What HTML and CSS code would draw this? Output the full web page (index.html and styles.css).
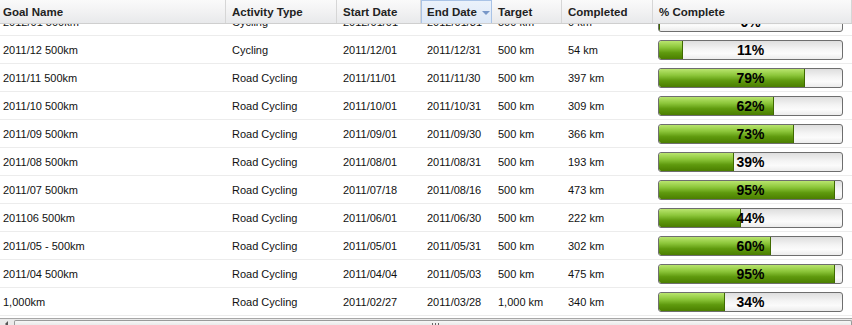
FILE: index.html
```html
<!DOCTYPE html>
<html>
<head>
<meta charset="utf-8">
<link rel="stylesheet" href="styles.css">
</head>
<body>
<div class="grid">
  <div class="head">
    <div class="hc first">Goal Name</div>
    <div class="hc">Activity Type</div>
    <div class="hc">Start Date</div>
    <div class="hc sorted">End Date <span class="arrow"></span></div>
    <div class="hc">Target</div>
    <div class="hc">Completed</div>
    <div class="hc last">% Complete</div>
  </div>
  <div class="body">
    <div class="rows">
      <div class="row"><div class="c first">2012/01 500km</div><div class="c">Cycling</div><div class="c">2012/01/01</div><div class="c">2012/01/31</div><div class="c">500 km</div><div class="c">0 km</div><div class="c pc"><div class="bar"><div class="fill" style="width:0%"></div><span class="pct">0%</span></div></div></div>
      <div class="row"><div class="c first">2011/12 500km</div><div class="c">Cycling</div><div class="c">2011/12/01</div><div class="c">2011/12/31</div><div class="c">500 km</div><div class="c">54 km</div><div class="c pc"><div class="bar"><div class="fill" style="width:13%"></div><span class="pct">11%</span></div></div></div>
      <div class="row"><div class="c first">2011/11 500km</div><div class="c">Road Cycling</div><div class="c">2011/11/01</div><div class="c">2011/11/30</div><div class="c">500 km</div><div class="c">397 km</div><div class="c pc"><div class="bar"><div class="fill" style="width:80%"></div><span class="pct">79%</span></div></div></div>
      <div class="row"><div class="c first">2011/10 500km</div><div class="c">Road Cycling</div><div class="c">2011/10/01</div><div class="c">2011/10/31</div><div class="c">500 km</div><div class="c">309 km</div><div class="c pc"><div class="bar"><div class="fill" style="width:63%"></div><span class="pct">62%</span></div></div></div>
      <div class="row"><div class="c first">2011/09 500km</div><div class="c">Road Cycling</div><div class="c">2011/09/01</div><div class="c">2011/09/30</div><div class="c">500 km</div><div class="c">366 km</div><div class="c pc"><div class="bar"><div class="fill" style="width:74%"></div><span class="pct">73%</span></div></div></div>
      <div class="row"><div class="c first">2011/08 500km</div><div class="c">Road Cycling</div><div class="c">2011/08/01</div><div class="c">2011/08/31</div><div class="c">500 km</div><div class="c">193 km</div><div class="c pc"><div class="bar"><div class="fill" style="width:41%"></div><span class="pct">39%</span></div></div></div>
      <div class="row"><div class="c first">2011/07 500km</div><div class="c">Road Cycling</div><div class="c">2011/07/18</div><div class="c">2011/08/16</div><div class="c">500 km</div><div class="c">473 km</div><div class="c pc"><div class="bar"><div class="fill" style="width:96%"></div><span class="pct">95%</span></div></div></div>
      <div class="row"><div class="c first">201106 500km</div><div class="c">Road Cycling</div><div class="c">2011/06/01</div><div class="c">2011/06/30</div><div class="c">500 km</div><div class="c">222 km</div><div class="c pc"><div class="bar"><div class="fill" style="width:45%"></div><span class="pct">44%</span></div></div></div>
      <div class="row"><div class="c first">2011/05 - 500km</div><div class="c">Road Cycling</div><div class="c">2011/05/01</div><div class="c">2011/05/31</div><div class="c">500 km</div><div class="c">302 km</div><div class="c pc"><div class="bar"><div class="fill" style="width:61%"></div><span class="pct">60%</span></div></div></div>
      <div class="row"><div class="c first">2011/04 500km</div><div class="c">Road Cycling</div><div class="c">2011/04/04</div><div class="c">2011/05/03</div><div class="c">500 km</div><div class="c">475 km</div><div class="c pc"><div class="bar"><div class="fill" style="width:96%"></div><span class="pct">95%</span></div></div></div>
      <div class="row"><div class="c first">1,000km</div><div class="c">Road Cycling</div><div class="c">2011/02/27</div><div class="c">2011/03/28</div><div class="c">1,000 km</div><div class="c">340 km</div><div class="c pc"><div class="bar"><div class="fill" style="width:36%"></div><span class="pct">34%</span></div></div></div>
    </div>
  </div>
  <div class="hscroll">
    <div class="sbtn"><span class="larr"></span></div>
    <div class="thumb"><span class="grip"></span></div>
  </div>
</div>
</body>
</html>
```
FILE: styles.css
```css
html, body {
  margin: 0;
  padding: 0;
  background: #fff;
}
.grid {
  width: 852px;
  height: 325px;
  overflow: hidden;
  display: flex;
  flex-direction: column;
  font-family: "Liberation Sans", Arial, sans-serif;
  font-size: 11px;
  color: #111;
}
.head {
  position: relative;
  z-index: 2;
  height: 24px;
  flex: none;
  display: grid;
  grid-template-columns: 226px 111px 84px 71px 70px 91px 199px;
  background: linear-gradient(#fafafa, #f2f2f3 50%, #e8e9eb);
  border-bottom: 1px solid #cfcfcf;
  box-sizing: border-box;
}
.hc {
  font-weight: bold;
  font-size: 11.5px;
  color: #222;
  padding-left: 6px;
  display: flex;
  align-items: center;
  border-right: 1px solid #d6d6d6;
  box-sizing: border-box;
  white-space: nowrap;
}
.hc.first { padding-left: 3px; }
.hc.sorted {
  background: linear-gradient(#ebf2fb, #dde8f6);
  border: 1px solid #a9c3e6;
  border-bottom: none;
  padding-left: 5px;
}
.arrow {
  width: 0;
  height: 0;
  border-left: 4px solid transparent;
  border-right: 4px solid transparent;
  border-top: 4px solid #7797c8;
  margin-left: 5px;
  margin-top: 1px;
}
.body {
  flex: none;
  height: 294px;
  overflow: hidden;
}
.rows {
  margin-top: -16px;
}
.row {
  height: 28px;
  display: grid;
  grid-template-columns: 226px 111px 84px 71px 70px 91px 199px;
  border-bottom: 1px solid #ececec;
  box-sizing: border-box;
}
.c {
  padding-left: 6px;
  display: flex;
  align-items: center;
  white-space: nowrap;
}
.c.first { padding-left: 3px; }
.c.pc { padding-left: 5px; }
.bar {
  position: relative;
  width: 185px;
  height: 20px;
  box-sizing: border-box;
  border: 1px solid #6e6e6e;
  border-radius: 3px;
  background: linear-gradient(#dedede, #f4f4f4 45%, #fbfbfb 70%, #ececec);
  overflow: hidden;
}
.fill {
  height: 100%;
  box-sizing: border-box;
  background: linear-gradient(#b9e56e, #8cc63a 35%, #5f9a0e 65%, #4b7e00);
  border-right: 1px solid #3f6a00;
  border-radius: 2px 0 0 2px;
}
.pct {
  position: absolute;
  left: 0;
  right: 0;
  top: 0;
  bottom: 0;
  display: flex;
  align-items: center;
  justify-content: center;
  font-weight: bold;
  font-size: 14px;
  color: #000;
}
.hscroll {
  flex: none;
  height: 7px;
  display: flex;
  border-top: 1px solid #a7a7a7;
  background: #eaeaea;
}
.sbtn {
  width: 14px;
  position: relative;
}
.larr {
  position: absolute;
  left: 5px;
  top: 2px;
  width: 0;
  height: 0;
  border-top: 3px solid transparent;
  border-bottom: 3px solid transparent;
  border-right: 3px solid #555;
}
.thumb {
  flex: 1;
  margin-top: 1px;
  border: 1px solid #9a9a9a;
  border-bottom: none;
  border-radius: 2px 2px 0 0;
  background: linear-gradient(#f7f7f7, #e6e6e6);
  position: relative;
}
.grip {
  position: absolute;
  left: 417px;
  top: 2px;
  width: 7px;
  height: 4px;
  background: repeating-linear-gradient(90deg, #666 0 1px, transparent 1px 3px);
}
```
